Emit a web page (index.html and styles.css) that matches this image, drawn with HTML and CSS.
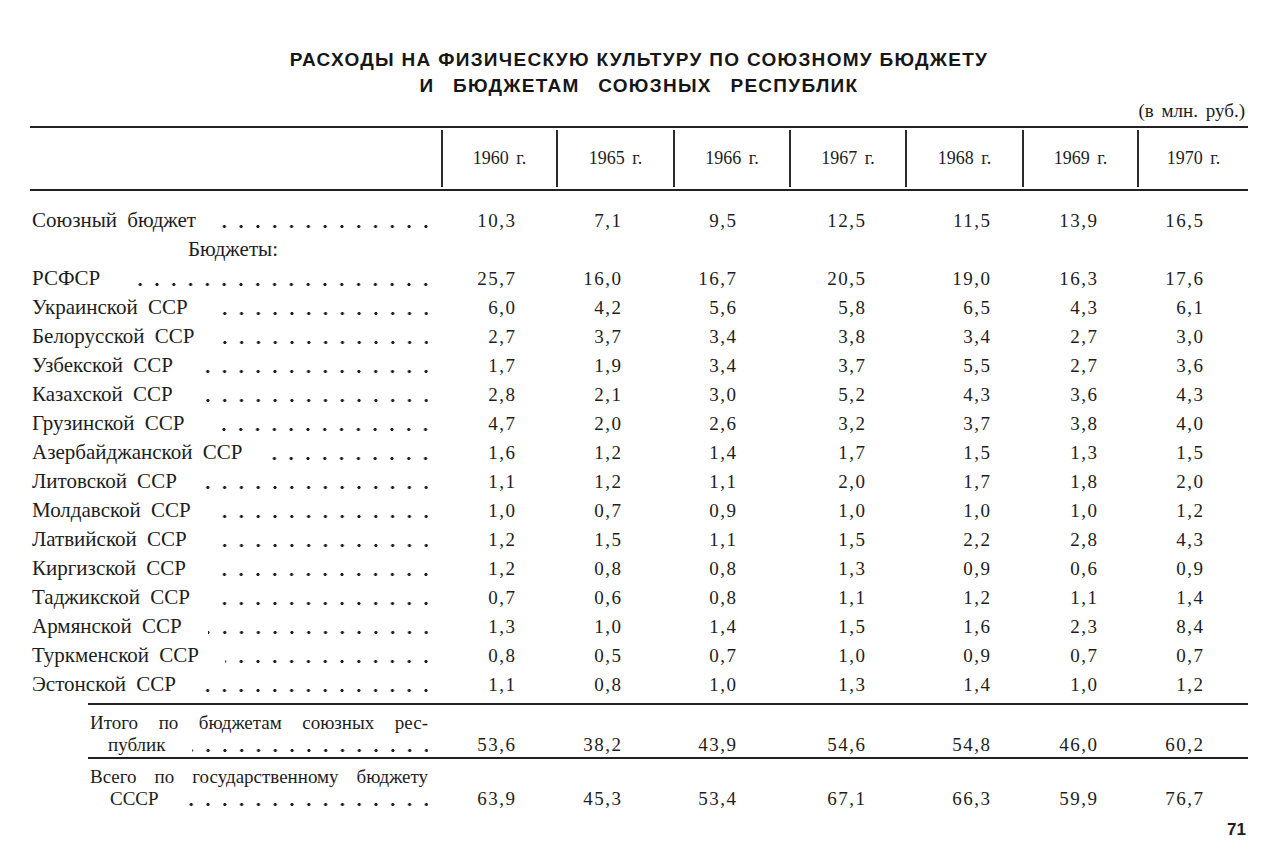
FILE: index.html
```html
<!DOCTYPE html>
<html lang="ru">
<head>
<meta charset="utf-8">
<title>Расходы на физическую культуру</title>
<link rel="stylesheet" href="styles.css">
</head>
<body>
<div class="page">
  <h1 class="title">
    <span class="t1">РАСХОДЫ НА ФИЗИЧЕСКУЮ КУЛЬТУРУ ПО СОЮЗНОМУ БЮДЖЕТУ</span>
    <span class="t2">И БЮДЖЕТАМ СОЮЗНЫХ РЕСПУБЛИК</span>
  </h1>
  <div class="units">(в млн. руб.)</div>

  <div class="thead">
    <div class="hc hc-label"></div>
    <div class="hc">1960 г.</div>
    <div class="hc">1965 г.</div>
    <div class="hc">1966 г.</div>
    <div class="hc">1967 г.</div>
    <div class="hc">1968 г.</div>
    <div class="hc">1969 г.</div>
    <div class="hc">1970 г.</div>
  </div>

  <div class="tbody">
    <div class="row"><div class="label"><span class="name">Союзный бюджет</span><span class="leader"></span></div><div class="v c1">10,3</div><div class="v c2">7,1</div><div class="v c3">9,5</div><div class="v c4">12,5</div><div class="v c5">11,5</div><div class="v c6">13,9</div><div class="v c7">16,5</div></div>
    <div class="row"><div class="label"><span class="name subhead">Бюджеты:</span></div></div>
    <div class="row"><div class="label"><span class="name">РСФСР</span><span class="leader"></span></div><div class="v c1">25,7</div><div class="v c2">16,0</div><div class="v c3">16,7</div><div class="v c4">20,5</div><div class="v c5">19,0</div><div class="v c6">16,3</div><div class="v c7">17,6</div></div>
    <div class="row"><div class="label"><span class="name">Украинской ССР</span><span class="leader"></span></div><div class="v c1">6,0</div><div class="v c2">4,2</div><div class="v c3">5,6</div><div class="v c4">5,8</div><div class="v c5">6,5</div><div class="v c6">4,3</div><div class="v c7">6,1</div></div>
    <div class="row"><div class="label"><span class="name">Белорусской ССР</span><span class="leader"></span></div><div class="v c1">2,7</div><div class="v c2">3,7</div><div class="v c3">3,4</div><div class="v c4">3,8</div><div class="v c5">3,4</div><div class="v c6">2,7</div><div class="v c7">3,0</div></div>
    <div class="row"><div class="label"><span class="name">Узбекской ССР</span><span class="leader"></span></div><div class="v c1">1,7</div><div class="v c2">1,9</div><div class="v c3">3,4</div><div class="v c4">3,7</div><div class="v c5">5,5</div><div class="v c6">2,7</div><div class="v c7">3,6</div></div>
    <div class="row"><div class="label"><span class="name">Казахской ССР</span><span class="leader"></span></div><div class="v c1">2,8</div><div class="v c2">2,1</div><div class="v c3">3,0</div><div class="v c4">5,2</div><div class="v c5">4,3</div><div class="v c6">3,6</div><div class="v c7">4,3</div></div>
    <div class="row"><div class="label"><span class="name">Грузинской ССР</span><span class="leader"></span></div><div class="v c1">4,7</div><div class="v c2">2,0</div><div class="v c3">2,6</div><div class="v c4">3,2</div><div class="v c5">3,7</div><div class="v c6">3,8</div><div class="v c7">4,0</div></div>
    <div class="row"><div class="label"><span class="name">Азербайджанской ССР</span><span class="leader"></span></div><div class="v c1">1,6</div><div class="v c2">1,2</div><div class="v c3">1,4</div><div class="v c4">1,7</div><div class="v c5">1,5</div><div class="v c6">1,3</div><div class="v c7">1,5</div></div>
    <div class="row"><div class="label"><span class="name">Литовской ССР</span><span class="leader"></span></div><div class="v c1">1,1</div><div class="v c2">1,2</div><div class="v c3">1,1</div><div class="v c4">2,0</div><div class="v c5">1,7</div><div class="v c6">1,8</div><div class="v c7">2,0</div></div>
    <div class="row"><div class="label"><span class="name">Молдавской ССР</span><span class="leader"></span></div><div class="v c1">1,0</div><div class="v c2">0,7</div><div class="v c3">0,9</div><div class="v c4">1,0</div><div class="v c5">1,0</div><div class="v c6">1,0</div><div class="v c7">1,2</div></div>
    <div class="row"><div class="label"><span class="name">Латвийской ССР</span><span class="leader"></span></div><div class="v c1">1,2</div><div class="v c2">1,5</div><div class="v c3">1,1</div><div class="v c4">1,5</div><div class="v c5">2,2</div><div class="v c6">2,8</div><div class="v c7">4,3</div></div>
    <div class="row"><div class="label"><span class="name">Киргизской ССР</span><span class="leader"></span></div><div class="v c1">1,2</div><div class="v c2">0,8</div><div class="v c3">0,8</div><div class="v c4">1,3</div><div class="v c5">0,9</div><div class="v c6">0,6</div><div class="v c7">0,9</div></div>
    <div class="row"><div class="label"><span class="name">Таджикской ССР</span><span class="leader"></span></div><div class="v c1">0,7</div><div class="v c2">0,6</div><div class="v c3">0,8</div><div class="v c4">1,1</div><div class="v c5">1,2</div><div class="v c6">1,1</div><div class="v c7">1,4</div></div>
    <div class="row"><div class="label"><span class="name">Армянской ССР</span><span class="leader"></span></div><div class="v c1">1,3</div><div class="v c2">1,0</div><div class="v c3">1,4</div><div class="v c4">1,5</div><div class="v c5">1,6</div><div class="v c6">2,3</div><div class="v c7">8,4</div></div>
    <div class="row"><div class="label"><span class="name">Туркменской ССР</span><span class="leader"></span></div><div class="v c1">0,8</div><div class="v c2">0,5</div><div class="v c3">0,7</div><div class="v c4">1,0</div><div class="v c5">0,9</div><div class="v c6">0,7</div><div class="v c7">0,7</div></div>
    <div class="row"><div class="label"><span class="name">Эстонской ССР</span><span class="leader"></span></div><div class="v c1">1,1</div><div class="v c2">0,8</div><div class="v c3">1,0</div><div class="v c4">1,3</div><div class="v c5">1,4</div><div class="v c6">1,0</div><div class="v c7">1,2</div></div>
  </div>

  <div class="total">
    <div class="trow trow-first">
      <div class="tl">
        <div class="tl1">Итого по бюджетам союзных рес-</div>
        <div class="tl2 ind1"><span class="name">публик</span><span class="leader"></span></div>
      </div>
      <div class="v c1">53,6</div><div class="v c2">38,2</div><div class="v c3">43,9</div><div class="v c4">54,6</div><div class="v c5">54,8</div><div class="v c6">46,0</div><div class="v c7">60,2</div>
    </div>
    <div class="trow trow-last">
      <div class="tl">
        <div class="tl1">Всего по государственному бюджету</div>
        <div class="tl2 ind2"><span class="name">СССР</span><span class="leader"></span></div>
      </div>
      <div class="v c1">63,9</div><div class="v c2">45,3</div><div class="v c3">53,4</div><div class="v c4">67,1</div><div class="v c5">66,3</div><div class="v c6">59,9</div><div class="v c7">76,7</div>
    </div>
  </div>

  <div class="folio">71</div>
</div>
</body>
</html>
```
FILE: styles.css
```css
body {
  margin: 0;
  background: #ffffff;
  color: #1d1d1d;
  font-family: "Liberation Serif", "Times New Roman", serif;
}

.page {
  width: 1218px;
  padding: 47px 30px 0 30px;
}

.title {
  margin: 0;
  font-family: "Liberation Sans", Arial, sans-serif;
  font-weight: 700;
  font-size: 19px;
  line-height: 26px;
  letter-spacing: 1.3px;
  text-align: center;
  color: #161616;
}

.title span {
  display: block;
}

.t2 {
  word-spacing: 12px;
}

.units {
  margin-top: 2px;
  padding-right: 3px;
  text-align: right;
  font-size: 19px;
  line-height: 20px;
  word-spacing: 3px;
}

.thead,
.row {
  display: grid;
  grid-template-columns: 411px 115px 117px 116px 116px 117px 115px 111px;
}

.thead {
  margin-top: 5px;
  height: 61px;
  border-top: 2px solid #222;
  border-bottom: 2px solid #222;
}

.hc {
  margin: 2px 0;
  border-left: 2px solid #2a2a2a;
  display: flex;
  align-items: center;
  justify-content: center;
  font-size: 18px;
  word-spacing: 3px;
}

.hc-label {
  border-left: 0;
}

.tbody {
  padding: 15px 0 4px 0;
}

.row {
  height: 29px;
  font-size: 19px;
  line-height: 29px;
}

.label {
  display: flex;
  padding-left: 2px;
  padding-right: 13px;
  font-size: 21px;
}

.name {
  white-space: nowrap;
  word-spacing: 5px;
}

.subhead {
  margin-left: 156px;
}

.leader {
  flex: 1;
  margin-left: 26px;
  background-image: radial-gradient(circle at calc(100% - 2px) 50%, #1d1d1d 1.3px, rgba(29, 29, 29, 0) 1.9px);
  background-size: 16.8px 5px;
  background-repeat: repeat-x;
  background-position: right bottom 6px;
}

.v {
  text-align: right;
  letter-spacing: 1.5px;
}

.c1 { padding-right: 39.5px; }
.c2 { padding-right: 50.5px; }
.c3 { padding-right: 51.5px; }
.c4 { padding-right: 38.5px; }
.c5 { padding-right: 30.5px; }
.c6 { padding-right: 38.5px; }
.c7 { padding-right: 43.5px; }

.total {
  margin-left: 58px;
  border-top: 2px solid #222;
}

.trow {
  display: grid;
  grid-template-columns: 353px 115px 117px 116px 116px 117px 115px 111px;
  font-size: 19px;
  line-height: 22px;
}

.trow-first {
  padding: 7px 0 1px 0;
  border-bottom: 2px solid #222;
}

.trow-last {
  padding-top: 7px;
}

.trow .v {
  align-self: end;
}

.tl {
  padding-left: 2px;
  padding-right: 13px;
  font-size: 19px;
  word-spacing: 2px;
}

.tl1 {
  text-align: justify;
  text-align-last: justify;
}

.tl2 {
  display: flex;
  height: 22px;
}

.tl2 .leader {
  background-position: right bottom 3px;
}

.ind1 { padding-left: 18px; }
.ind2 { padding-left: 20px; }

.folio {
  margin-top: 10px;
  padding-right: 2px;
  text-align: right;
  font-family: "Liberation Sans", Arial, sans-serif;
  font-weight: 700;
  font-size: 17px;
  line-height: 20px;
}
```
